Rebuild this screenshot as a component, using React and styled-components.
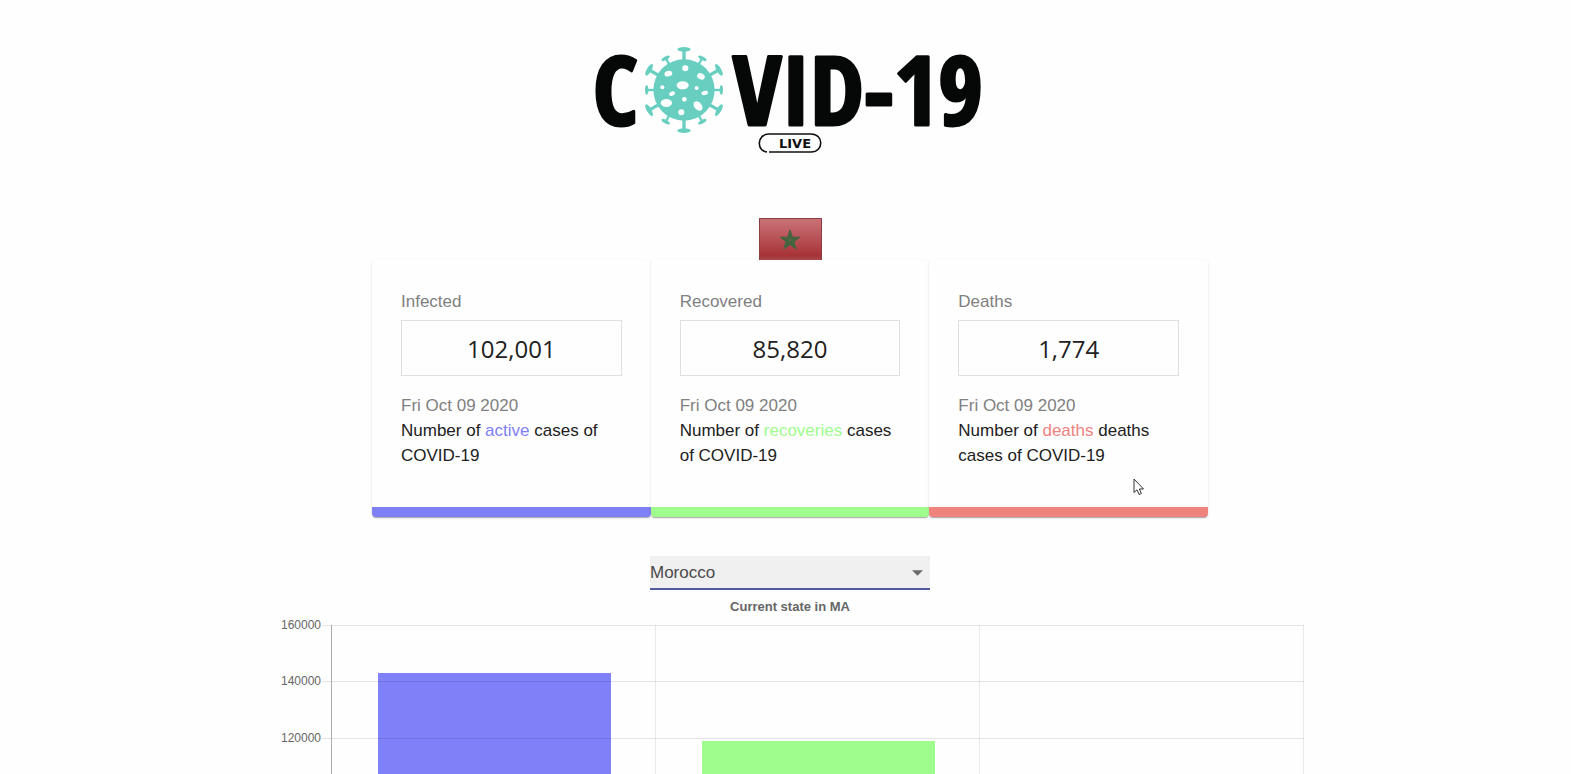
import React, { useState } from "react";
import styled, { createGlobalStyle } from "styled-components";

const GlobalStyle = createGlobalStyle`
  *, *::before, *::after { box-sizing: border-box; }
  body {
    margin: 0;
    background: #fefefe;
    font-family: "Liberation Sans", Arial, sans-serif;
    font-size: 17px;
    line-height: 25px;
    color: #212121;
  }
`;

const Page = styled.main`
  display: flex;
  flex-direction: column;
  align-items: center;
  height: 100vh;
  overflow: hidden;
  padding: 40px 0 0 9px;
`;

const Header = styled.header`
  display: flex;
  flex-direction: column;
  align-items: center;
  gap: 58px;
`;

const LogoImage = styled.svg`
  display: block;
  width: 390px;
  height: 120px;
`;

const FlagImage = styled.svg`
  display: block;
  width: 64px;
  height: 42px;
`;

const Wordmark = styled.text`
  font-family: "Open Sans Condensed", "Roboto Condensed", sans-serif;
  font-size: 96px;
  font-weight: 700;
  fill: #060808;
  stroke: #060808;
  stroke-width: 3px;
  stroke-linejoin: round;
`;

const LiveText = styled.text`
  font-family: "DejaVu Sans", sans-serif;
  font-size: 13px;
  font-weight: 700;
  fill: #111;
`;

const Cards = styled.section`
  display: flex;
  flex-shrink: 0;
  width: 100%;
  max-width: 836px;
`;

const Card = styled.article`
  position: relative;
  flex: 1 1 0;
  min-width: 0;
  padding: 29px 29px 39px;
  border-bottom: 10px solid ${(p) => p.$color};
  border-radius: 4px;
  background: #fefefe;
  box-shadow: 0 2px 1px -1px rgba(0, 0, 0, 0.2), 0 1px 1px rgba(0, 0, 0, 0.1),
    0 1px 3px rgba(0, 0, 0, 0.1);
`;

const Muted = styled.p`
  margin: 0;
  color: #808080;
`;

const Count = styled.div`
  display: flex;
  align-items: center;
  justify-content: center;
  height: 56px;
  margin: 6px 0 17px;
  border: 1px solid #dfdfdf;
  font-family: "Open Sans", "Noto Sans", sans-serif;
  font-size: 24px;
`;

const Description = styled.p`
  margin: 0;
`;

const Accent = styled.span`
  color: ${(p) => p.$color};
`;

const Pointer = styled.svg`
  position: absolute;
  left: 204px;
  top: 218px;
  width: 12px;
  height: 18px;
`;

const Picker = styled.label`
  display: grid;
  flex-shrink: 0;
  align-items: center;
  width: 100%;
  max-width: 280px;
  margin-top: 39px;
`;

const Select = styled.select`
  grid-area: 1 / 1;
  appearance: none;
  width: 100%;
  height: 34px;
  padding: 0 24px 0 0;
  border: 0;
  border-bottom: 2px solid #4f5b9c;
  border-radius: 0;
  background: #f0f0f0;
  color: #4a4a4a;
  font: inherit;
  outline: none;
`;

const Caret = styled.svg`
  grid-area: 1 / 1;
  justify-self: end;
  width: 11px;
  height: 6px;
  margin-right: 7px;
  pointer-events: none;
`;

const Chart = styled.svg`
  display: block;
  flex-shrink: 0;
  width: 100%;
  max-width: 1040px;
  height: auto;
`;

const ChartTitle = styled.text`
  font-size: 13px;
  font-weight: 700;
  fill: #666;
  text-anchor: middle;
`;

const TickLabel = styled.text`
  font-size: 12px;
  fill: #666;
  text-anchor: ${(p) => p.$anchor || "end"};
`;

const TEAL = "#68cfc0";

const holes = [
  [4, -65, 9, 9, 0],
  [-47, -49, 12, 8, -15],
  [51, -41, 12, 9, 25],
  [-4, -14, 18, 12, 0],
  [-65, -8, 6, 6, 0],
  [38, -6, 6, 6, 0],
  [62, 9, 10, 6, -15],
  [-36, 11, 9, 6, -25],
  [-53, 39, 17, 12, 0],
  [1, 28, 7, 7, 0],
  [42, 48, 16, 11, 48],
  [-8, 67, 9, 9, 0],
];

const spikes = Array.from({ length: 12 }, (_, i) => {
  const side = i % 6 === 3;
  const large = i % 2 === 0;
  return {
    angle: i * 30,
    reach: i % 6 === 0 ? 122 : large ? 121 : side ? 112 : 110,
    half: large ? 20 : 14,
    stem: large ? 10 : 7,
  };
});

function Logo() {
  return (
    <LogoImage viewBox="0 0 390 120" role="img" aria-label="COVID-19 live">
      <Wordmark x="-2" y="85">C</Wordmark>
      <g transform="translate(89 50) scale(0.333)" fill={TEAL}>
        {spikes.map((s) => (
          <g key={s.angle} transform={`rotate(${s.angle})`}>
            <rect x={-s.stem / 2} y={-s.reach} width={s.stem} height={s.reach - 80} />
            <ellipse cy={-s.reach} rx={s.half} ry={s.half > 15 ? 7 : 5} />
          </g>
        ))}
        <circle r="92" />
        {holes.map(([x, y, rx, ry, a]) => (
          <ellipse key={`${x},${y}`} rx={rx} ry={ry} fill="#fefefe" transform={`translate(${x} ${y}) rotate(${a})`} />
        ))}
      </g>
      <Wordmark x="138" y="85">VID-19</Wordmark>
      <path
        d="M172 112 C161 111 162 94 174 94 H216 C229 94 229 112 216 112 H174"
        fill="none"
        stroke="#111"
        strokeWidth="1.6"
      />
      <LiveText x="184" y="108">LIVE</LiveText>
    </LogoImage>
  );
}

function Flag() {
  return (
    <FlagImage viewBox="0 0 64 42" role="img" aria-label="Flag of Morocco">
      <defs>
        <linearGradient id="flagShade" x1="0" y1="0" x2="0" y2="1">
          <stop offset="0" stopColor="#cb7478" />
          <stop offset="0.45" stopColor="#b9555a" />
          <stop offset="0.9" stopColor="#a63237" />
          <stop offset="1" stopColor="#a94a4c" />
        </linearGradient>
      </defs>
      <rect x="1" y="0" width="63" height="42" fill="url(#flagShade)" />
      <path d="M1.5 42V0.5H63.5V42" fill="none" stroke="#8c3b3f" />
      <path
        d="M32 12l2.4 7.2h7.6l-6.1 4.5 2.3 7.3-6.2-4.5-6.2 4.5 2.3-7.3-6.1-4.5h7.6z"
        fill="#44633f"
        stroke="#44633f"
      />
      <circle cx="32" cy="22" r="1" fill="#7b6650" />
    </FlagImage>
  );
}

const stats = [
  { title: "Infected", count: 102001, color: "#8080f6", word: "active", rest: "cases of COVID-19" },
  { title: "Recovered", count: 85820, color: "#9ffd8e", word: "recoveries", rest: "cases of COVID-19" },
  { title: "Deaths", count: 1774, color: "#ef837e", word: "deaths", rest: "deaths cases of COVID-19", pointer: true },
];

function StatCard({ stat }) {
  return (
    <Card $color={stat.color}>
      <Muted>{stat.title}</Muted>
      <Count>{stat.count.toLocaleString("en-US")}</Count>
      <Muted>Fri Oct 09 2020</Muted>
      <Description>
        Number of <Accent $color={stat.color}>{stat.word}</Accent> {stat.rest}
      </Description>
      {stat.pointer && (
        <Pointer viewBox="0 0 12 18" aria-hidden="true">
          <path
            d="M1 1V14.5L4 11.8L6.2 16.5L8.4 15.5L6.3 11H10.5Z"
            fill="#fff"
            stroke="#333"
            strokeLinejoin="round"
          />
        </Pointer>
      )}
    </Card>
  );
}

const ticks = [160000, 140000, 120000, 100000, 80000, 60000, 40000, 20000, 0];
const bars = [
  { label: "Infected", value: 143000, color: "#8080f8" },
  { label: "Recovered", value: 118600, color: "#9ffd8e" },
  { label: "Deaths", value: 2486, color: "#ef837e" },
];
const TOP = 35;
const BASE = 487;
const LEFT = 61;
const STEP = 324;
const yOf = (value) => Math.floor(BASE - (value / 160000) * (BASE - TOP));

function BarChart() {
  return (
    <Chart viewBox="0 0 1040 515" role="img" aria-label="Current state in MA">
      <ChartTitle x="520" y="21">Current state in MA</ChartTitle>
      {bars.map((bar, i) => (
        <rect
          key={bar.label}
          x={LEFT + i * STEP + 47}
          y={yOf(bar.value)}
          width="233"
          height={BASE - yOf(bar.value)}
          fill={bar.color}
        />
      ))}
      {ticks.map((tick) => (
        <g key={tick}>
          <rect x={LEFT - 9} y={yOf(tick)} width={STEP * 3 + 10} height="1" fill="rgba(0,0,0,0.1)" />
          <TickLabel x="51" y={yOf(tick) + 4}>{tick}</TickLabel>
        </g>
      ))}
      {[0, 1, 2, 3].map((i) => (
        <rect
          key={i}
          x={LEFT + i * STEP}
          y={TOP}
          width="1"
          height={BASE - TOP + 9}
          fill={i === 0 ? "#adadad" : "rgba(0,0,0,0.08)"}
        />
      ))}
      {bars.map((bar, i) => (
        <TickLabel key={bar.label} $anchor="middle" x={LEFT + i * STEP + STEP / 2} y="509">
          {bar.label}
        </TickLabel>
      ))}
    </Chart>
  );
}

export default function App() {
  const [country, setCountry] = useState("Morocco");
  return (
    <>
      <GlobalStyle />
      <Page>
        <Header>
          <Logo />
          <Flag />
        </Header>
        <Cards>
          {stats.map((stat) => (
            <StatCard key={stat.title} stat={stat} />
          ))}
        </Cards>
        <Picker>
          <Select aria-label="Country" value={country} onChange={(e) => setCountry(e.target.value)}>
            <option>Morocco</option>
          </Select>
          <Caret viewBox="0 0 10 5" aria-hidden="true">
            <path d="M0 0h10l-5 5z" fill="#6a6a6a" />
          </Caret>
        </Picker>
        <BarChart />
      </Page>
    </>
  );
}
